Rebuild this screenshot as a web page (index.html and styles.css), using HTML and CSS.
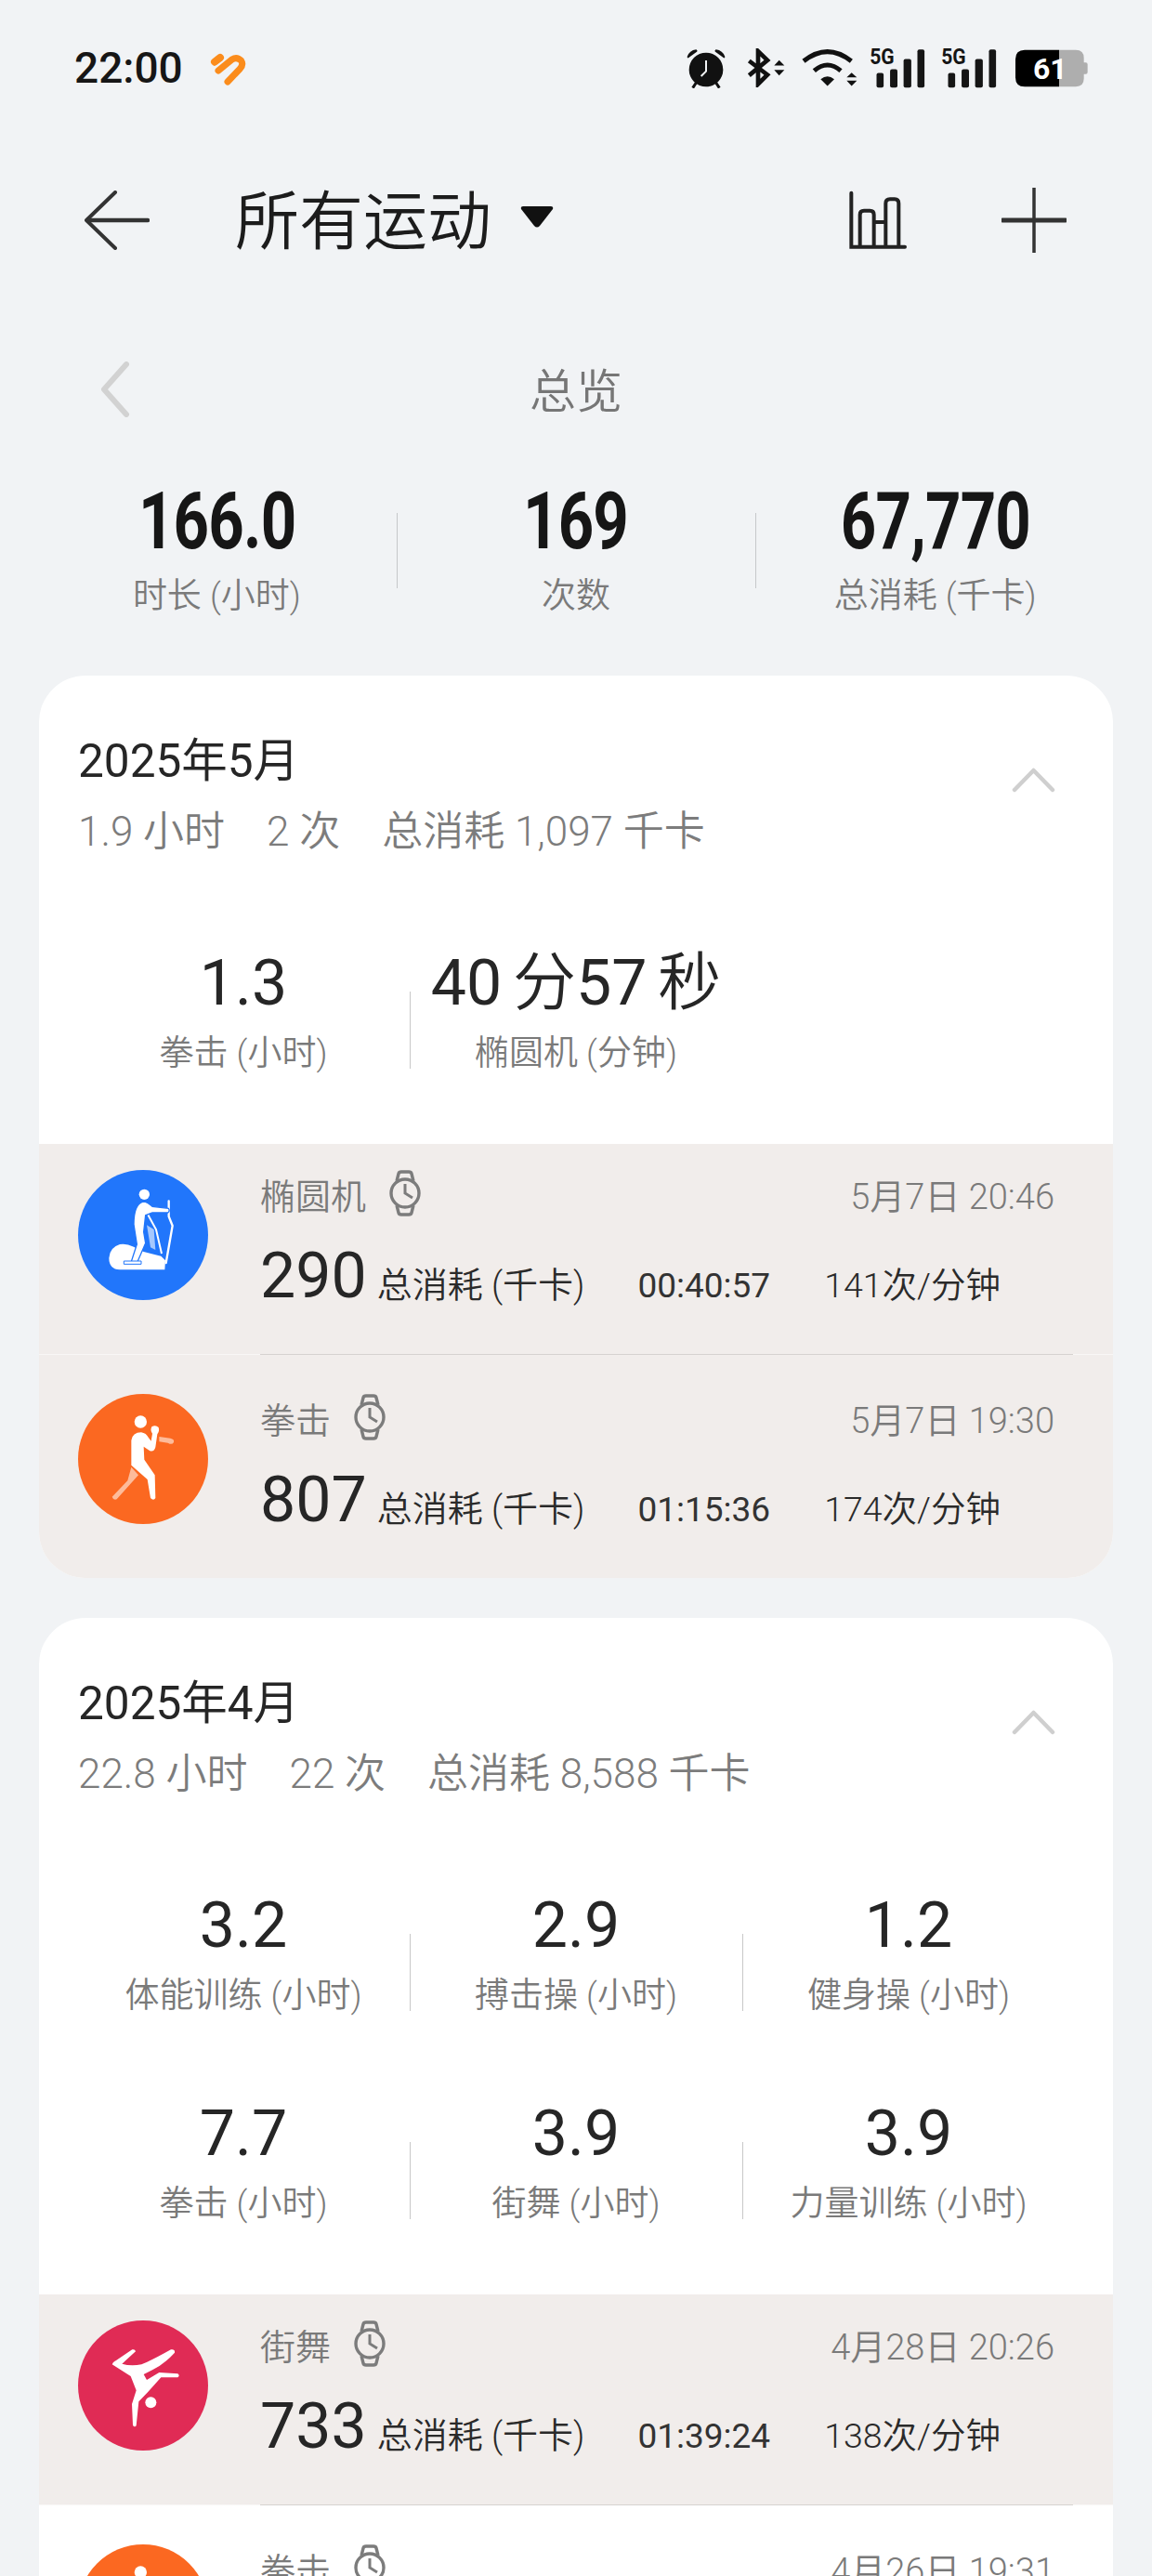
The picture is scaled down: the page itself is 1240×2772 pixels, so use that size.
FILE: index.html
```html
<!DOCTYPE html>
<html lang="zh-CN">

<head>
    <meta charset="UTF-8">
    <meta name="viewport" content="width=device-width, initial-scale=1.0">
    <title>所有运动</title>
    <link rel="stylesheet" href="styles.css">
</head>

<body>
    <svg class="sprite" width="0" height="0">
        <symbol id="watch" viewBox="0 0 34 50">
            <circle cx="17" cy="25" r="15" fill="none" stroke="#7c7c7c" stroke-width="3.4" />
            <path d="M8 12L10 4Q10.5 2 13 2H21Q23.5 2 24 4L26 12M8 38L10 46Q10.5 48 13 48H21Q23.5 48 24 46L26 38" fill="none" stroke="#7c7c7c" stroke-width="3.4" />
            <path d="M17 15V25L25 30" fill="none" stroke="#7c7c7c" stroke-width="3" />
        </symbol>
        <symbol id="chevron-up" viewBox="0 0 47 28">
            <path d="M3 25L23.5 4L44 25" fill="none" stroke="#cfcfcf" stroke-width="4.5" stroke-linecap="round" stroke-linejoin="round" />
        </symbol>
        <symbol id="signal" viewBox="25 20 180 130">
            <text x="25" y="72" class="net-label" textLength="80" lengthAdjust="spacingAndGlyphs">5G</text>
            <rect x="47" y="100" width="23" height="48" rx="6" />
            <rect x="91" y="88" width="24" height="60" rx="6" />
            <rect x="135" y="55" width="25" height="93" rx="6" />
            <rect x="180" y="24" width="23" height="124" rx="6" />
        </symbol>
        <symbol id="boxer" viewBox="0 0 420 420">
            <circle cx="202" cy="90" r="20" fill="#fff" />
            <path d="M262 138L298 143Q312 146 309 156Q304 166 290 158L262 154Z" fill="#fff" opacity=".55" />
            <path d="M172 236L195 262L125 340Q114 344 110 332L160 280Z" fill="#fff" opacity=".55" />
            <path d="M172 150Q176 124 204 124Q220 126 228 142L236 152L240 128Q232 118 238 106Q250 98 260 108Q264 120 256 130L250 172Q246 188 232 184L212 170L214 212L248 262L250 336Q244 346 234 336L224 276L172 230Z" fill="#fff" />
        </symbol>
    </svg>

    <div class="status">
        <span class="clock">22:00</span>
        <svg class="heart" viewBox="0 0 162 138">
            <path d="M36 50L54 36" fill="none" stroke="#fb8c1c" stroke-width="24" stroke-linecap="round" />
            <path d="M48 78L92 42Q108 32 122 46Q130 58 118 72L78 114" fill="none" stroke="#fb8c1c" stroke-width="21" stroke-linecap="round" stroke-linejoin="round" />
        </svg>
        <div class="status-icons">
            <svg class="ico-alarm" viewBox="25 20 130 132">
                <circle cx="90" cy="92" r="55" fill="#111" />
                <path d="M90 62V97L74 113" fill="none" stroke="#f1f3f5" stroke-width="6" />
                <path d="M29 50Q36 30 58 27Q64 30 60 34L33 54Q29 55 29 50ZM151 50Q144 30 122 27Q116 30 120 34L147 54Q151 55 151 50Z" fill="#111" />
                <path d="M58 134L47 151M122 134L133 151" stroke="#111" stroke-width="9" />
            </svg>
            <svg class="ico-bt" viewBox="222 25 123 125">
                <path d="M229 65L288 110L258 140V34L288 63L229 112" fill="none" stroke="#111" stroke-width="14" />
                <path d="M310 80H343L326 63ZM310 94H343L326 112Z" fill="#111" />
            </svg>
            <svg class="ico-wifi" viewBox="400 25 180 125">
                <path d="M406 66Q483 5 560 66" fill="none" stroke="#111" stroke-width="15" />
                <path d="M440 97Q483 60 526 97" fill="none" stroke="#111" stroke-width="15" />
                <path d="M461 124Q483 106 505 124L483 146Z" fill="#111" />
                <path d="M545 118H578L561 103ZM545 129H578L561 146Z" fill="#111" />
            </svg>
            <svg class="ico-signal"><use href="#signal" /></svg>
            <svg class="ico-signal"><use href="#signal" /></svg>
            <svg class="ico-battery" viewBox="495 28 234 122">
                <path d="M636 30H690Q716 30 716 56V70H722Q728 70 728 76V102Q728 108 722 108H716V122Q716 148 690 148H636Z" fill="#aeaeae" />
                <path d="M636 30H525Q495 30 495 60V118Q495 148 525 148H636Z" fill="#000" />
                <text x="552" y="124" class="battery-level">61</text>
            </svg>
        </div>
    </div>

    <div class="nav">
        <svg class="nav-back" viewBox="0 0 70 64">
            <path d="M33 2L2 32L33 62" fill="none" stroke="#333" stroke-width="4" stroke-linecap="round" stroke-linejoin="round" />
            <path d="M3 32H68" fill="none" stroke="#333" stroke-width="4.5" stroke-linecap="round" />
        </svg>
        <span class="nav-title">所有运动</span>
        <svg class="nav-caret" viewBox="0 0 36 24">
            <path d="M3 1H33Q36 1 35 4L21 22Q18 25 15 22L1 4Q0 1 3 1Z" fill="#111" />
        </svg>
        <svg class="nav-chart" viewBox="0 0 252 252">
            <path d="M37 38V212H210M65 212V108Q65 95 78 95H97Q110 95 110 108V212M110 132H148M148 212V72Q148 58 162 58H177Q190 58 190 72V212" fill="none" stroke="#222" stroke-width="12" stroke-linecap="round" />
        </svg>
        <svg class="nav-plus" viewBox="0 0 70 70">
            <path d="M35 0V70" stroke="#333" stroke-width="3.5" stroke-linecap="round" />
            <path d="M1 35H69" stroke="#333" stroke-width="5" stroke-linecap="round" />
        </svg>
    </div>

    <div class="period">
        <svg class="period-prev" viewBox="0 0 32 60">
            <path d="M28 3L4 30L28 57" fill="none" stroke="#d2d2d2" stroke-width="6" stroke-linecap="round" stroke-linejoin="round" />
        </svg>
        <span class="period-name">总览</span>
    </div>

    <div class="summary">
        <div class="summary-cell">
            <div class="summary-value"><span>166.0</span></div>
            <div class="label">时长 (小时)</div>
        </div>
        <div class="summary-cell">
            <div class="summary-value"><span>169</span></div>
            <div class="label">次数</div>
        </div>
        <div class="summary-cell">
            <div class="summary-value"><span>67,770</span></div>
            <div class="label">总消耗 (千卡)</div>
        </div>
    </div>

    <section class="card">
        <div class="card-head">
            <div>
                <div class="card-month">2025年5月</div>
                <div class="card-sub">
                    <span>1.9 小时</span><span>2 次</span><span>总消耗 1,097 千卡</span>
                </div>
            </div>
            <svg class="card-toggle"><use href="#chevron-up" /></svg>
        </div>
        <div class="stats">
            <div class="stat">
                <div class="stat-value">1.3</div>
                <div class="label">拳击 (小时)</div>
            </div>
            <div class="stat">
                <div class="stat-value">40 <span class="stat-unit">分</span>57 <span class="stat-unit">秒</span></div>
                <div class="label">椭圆机 (分钟)</div>
            </div>
        </div>
        <div class="item tinted">
            <svg class="item-icon" viewBox="0 0 420 420">
                <circle cx="210" cy="210" r="210" fill="#2176fb" />
                <circle cx="214" cy="79" r="17" fill="#fff" />
                <path d="M135 322Q100 320 100 284Q102 250 135 240Q155 236 180 248L212 264L268 278L282 292L280 322Z" fill="#fff" />
                <path d="M293 100V150L305 180L284 300" fill="none" stroke="#fff" stroke-width="7" stroke-linecap="round" stroke-linejoin="round" />
                <path d="M226 145L252 192L270 270" fill="none" stroke="#fff" stroke-width="6" />
                <path d="M222 178L245 192L250 258L234 250Z" fill="#fff" opacity=".6" />
                <path d="M180 176Q180 110 210 102Q224 102 240 118L292 124Q298 132 290 138L240 138L218 146L212 200L218 236L192 296L172 296L190 240Z" fill="#fff" stroke="#2176fb" stroke-width="4" />
                <path d="M148 294H204V304H148Z" fill="#fff" stroke="#2176fb" stroke-width="3" />
            </svg>
            <div class="item-body">
                <div class="item-top">
                    <span class="item-name">椭圆机</span>
                    <svg class="watch"><use href="#watch" /></svg>
                    <span class="item-date">5月7日 20:46</span>
                </div>
                <div class="item-data">
                    <span class="item-kcal">290</span>
                    <span class="item-unit">总消耗 (千卡)</span>
                    <span class="item-time">00:40:57</span>
                    <span class="item-rate">141次/分钟</span>
                </div>
            </div>
        </div>
        <div class="item tinted last">
            <svg class="item-icon boxing"><use href="#boxer" /></svg>
            <div class="item-body">
                <div class="item-top">
                    <span class="item-name">拳击</span>
                    <svg class="watch"><use href="#watch" /></svg>
                    <span class="item-date">5月7日 19:30</span>
                </div>
                <div class="item-data">
                    <span class="item-kcal">807</span>
                    <span class="item-unit">总消耗 (千卡)</span>
                    <span class="item-time">01:15:36</span>
                    <span class="item-rate">174次/分钟</span>
                </div>
            </div>
        </div>
    </section>

    <section class="card">
        <div class="card-head">
            <div>
                <div class="card-month">2025年4月</div>
                <div class="card-sub">
                    <span>22.8 小时</span><span>22 次</span><span>总消耗 8,588 千卡</span>
                </div>
            </div>
            <svg class="card-toggle"><use href="#chevron-up" /></svg>
        </div>
        <div class="stats">
            <div class="stat">
                <div class="stat-value">3.2</div>
                <div class="label">体能训练 (小时)</div>
            </div>
            <div class="stat">
                <div class="stat-value">2.9</div>
                <div class="label">搏击操 (小时)</div>
            </div>
            <div class="stat">
                <div class="stat-value">1.2</div>
                <div class="label">健身操 (小时)</div>
            </div>
            <div class="stat">
                <div class="stat-value">7.7</div>
                <div class="label">拳击 (小时)</div>
            </div>
            <div class="stat">
                <div class="stat-value">3.9</div>
                <div class="label">街舞 (小时)</div>
            </div>
            <div class="stat">
                <div class="stat-value">3.9</div>
                <div class="label">力量训练 (小时)</div>
            </div>
        </div>
        <div class="item tinted">
            <svg class="item-icon" viewBox="0 0 420 420">
                <circle cx="210" cy="210" r="210" fill="#e02b55" />
                <circle cx="235" cy="265" r="18" fill="#fff" />
                <path d="M110 142Q112 134 122 130L175 94Q184 92 186 100L142 140Q170 148 205 142Q240 128 300 94Q314 92 312 104Q280 140 240 160L212 174L222 192L262 168L322 172Q330 178 322 184L268 184L225 232L196 262L188 340Q182 346 177 338L174 270L188 226L170 180Z" fill="#fff" />
            </svg>
            <div class="item-body">
                <div class="item-top">
                    <span class="item-name">街舞</span>
                    <svg class="watch"><use href="#watch" /></svg>
                    <span class="item-date">4月28日 20:26</span>
                </div>
                <div class="item-data">
                    <span class="item-kcal">733</span>
                    <span class="item-unit">总消耗 (千卡)</span>
                    <span class="item-time">01:39:24</span>
                    <span class="item-rate">138次/分钟</span>
                </div>
            </div>
        </div>
        <div class="item last">
            <svg class="item-icon boxing"><use href="#boxer" /></svg>
            <div class="item-body">
                <div class="item-top">
                    <span class="item-name">拳击</span>
                    <svg class="watch"><use href="#watch" /></svg>
                    <span class="item-date">4月26日 19:31</span>
                </div>
            </div>
        </div>
    </section>
</body>

</html>
```
FILE: styles.css
```css
html,
body {
    height: 2772px;
    overflow: hidden;
}

body {
    margin: 0;
    background: #f1f3f5;
    color: #1a1a1a;
    font-family: Roboto, "Noto Sans CJK SC", sans-serif;
}

.sprite {
    position: absolute;
}

.label {
    margin-top: 6px;
    color: #7a7a7a;
    font-size: 37px;
    font-weight: 350;
    line-height: 60px;
    text-align: center;
    white-space: nowrap;
}

/* status bar */
.status {
    display: flex;
    align-items: center;
    height: 146px;
    padding-left: 80px;
}

.clock {
    font-size: 46px;
    font-weight: 500;
    color: #161616;
}

.heart {
    width: 54px;
    height: 46px;
    margin-left: 22px;
}

.status-icons {
    display: flex;
    align-items: center;
    margin-left: auto;
    margin-right: 69px;
}

.ico-alarm {
    width: 44px;
    height: 44px;
}

.ico-bt {
    width: 41px;
    height: 42px;
    margin-left: 22px;
}

.ico-wifi {
    width: 60px;
    height: 42px;
    margin-left: 18px;
}

.ico-signal {
    width: 60px;
    height: 43px;
    margin-left: 13px;
    fill: #151515;
}

.ico-signal + .ico-signal {
    margin-left: 17px;
}

.net-label {
    font-family: Roboto, sans-serif;
    font-size: 70px;
    font-weight: 700;
}

.ico-battery {
    width: 78px;
    height: 41px;
    margin-left: 20px;
}

.battery-level {
    fill: #fff;
    font-family: Roboto, sans-serif;
    font-size: 96px;
    font-weight: 700;
}

/* top bar */
.nav {
    display: flex;
    align-items: center;
    height: 182px;
    padding-left: 91px;
}

.nav-back {
    width: 70px;
    height: 64px;
}

.nav-title {
    margin-left: 92px;
    margin-top: 5px;
    color: #1c1c1c;
    font-size: 69px;
    font-weight: 350;
    line-height: 80px;
}

.nav-caret {
    width: 36px;
    height: 24px;
    margin-left: 31px;
    margin-top: -8px;
}

.nav-chart {
    width: 84px;
    height: 84px;
    margin-left: auto;
}

.nav-plus {
    width: 70px;
    height: 70px;
    margin-left: 90px;
    margin-right: 92px;
}

/* overview */
.period {
    position: relative;
    height: 90px;
    margin-top: 46px;
    text-align: center;
}

.period-prev {
    position: absolute;
    left: 108px;
    top: 15px;
    width: 32px;
    height: 60px;
}

.period-name {
    color: #767676;
    font-size: 50px;
    font-weight: 350;
    line-height: 96px;
}

.summary {
    display: grid;
    grid-template-columns: repeat(3, 1fr);
    margin: 52px 40px 55px;
}

.summary-cell {
    position: relative;
}

.summary-cell + .summary-cell::before {
    content: "";
    position: absolute;
    left: 0;
    top: 36px;
    height: 81px;
    border-left: 1px solid #c6c8ca;
}

.summary-value {
    color: #161616;
    font-size: 86px;
    font-weight: 700;
    letter-spacing: -1px;
    line-height: 90px;
    text-align: center;
}

.summary-value span {
    display: inline-block;
    transform: scaleX(0.78);
}

/* month cards */
.card {
    overflow: hidden;
    margin: 0 42px 43px;
    border-radius: 50px;
    background: #fff;
}

.card-head {
    display: flex;
    justify-content: space-between;
    padding: 62px 62px 0 42px;
}

.card-month {
    color: #262626;
    font-size: 49.5px;
    font-weight: 400;
    line-height: 60px;
}

.card-sub {
    display: flex;
    gap: 45px;
    margin-top: 16px;
    color: #7c7c7c;
    font-size: 44px;
    font-weight: 350;
    line-height: 60px;
}

.card-toggle {
    width: 47px;
    height: 28px;
    margin-top: 36px;
}

.stats {
    display: grid;
    grid-template-columns: repeat(3, 1fr);
    row-gap: 78px;
    padding: 93px 41px 67px;
}

.stat {
    position: relative;
}

.stat:not(:nth-child(3n + 1))::before {
    content: "";
    position: absolute;
    left: 0;
    top: 49px;
    height: 83px;
    border-left: 1px solid #c8c8c8;
}

.stat-value {
    color: #262626;
    font-size: 68px;
    font-weight: 400;
    line-height: 80px;
    text-align: center;
    white-space: nowrap;
    word-spacing: -5px;
}

.stat-unit {
    font-weight: 350;
}

/* activity rows */
.item {
    display: flex;
    padding: 28px 43px 0 42px;
    border-bottom: 1px solid #f9f7f6;
}

.item.last {
    padding-top: 42px;
    border-bottom: 0;
}

.item.tinted {
    background: #f1edeb;
}

.item-icon {
    flex: none;
    width: 140px;
    height: 140px;
}

.boxing {
    border-radius: 50%;
    background: #fb6821;
}

.item-body {
    flex: 1;
    box-sizing: border-box;
    height: 199px;
    margin-bottom: -1px;
    margin-left: 56px;
    padding-right: 20px;
    border-bottom: 1px solid #d6d2d0;
}

.last .item-body {
    height: 198px;
    margin-bottom: 0;
    border-bottom: 0;
}

.item-top {
    display: flex;
    align-items: center;
    height: 50px;
    color: #7a7a7a;
    font-size: 38px;
    font-weight: 350;
}

.watch {
    width: 34px;
    height: 50px;
    margin-left: 25px;
}

.item-date {
    margin-left: auto;
}

.item-data {
    display: flex;
    align-items: baseline;
    margin-top: 24px;
    font-size: 38px;
    white-space: nowrap;
}

.item-kcal {
    color: #262626;
    font-size: 68px;
    font-weight: 400;
    line-height: 80px;
}

.item-unit {
    margin-left: 11px;
    color: #2a2a2a;
    font-weight: 350;
}

.item-time {
    margin-left: 57px;
    color: #333;
    font-size: 37px;
    font-weight: 400;
}

.item-rate {
    margin-left: 58px;
    color: #2a2a2a;
    font-size: 37.5px;
    font-weight: 350;
}
```
